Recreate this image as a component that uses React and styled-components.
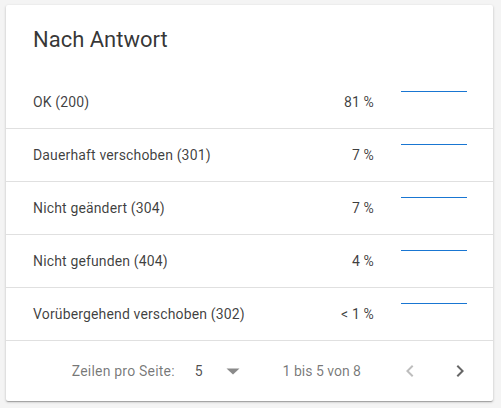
import styled, { createGlobalStyle } from "styled-components";

const GlobalStyle = createGlobalStyle`
    html, body {
        margin: 0;
        padding: 0;
        background: #f4f4f4;
        font-family: Roboto, "Liberation Sans", Arial, sans-serif;
    }
`

const rows = [
    { label: "OK (200)", share: "81 %" },
    { label: "Dauerhaft verschoben (301)", share: "7 %" },
    { label: "Nicht geändert (304)", share: "7 %" },
    { label: "Nicht gefunden (404)", share: "4 %" },
    { label: "Vorübergehend verschoben (302)", share: "< 1 %" },
]

function Sparkline() {
    return (
        <svg width="66" height="30" viewBox="0 0 66 30">
            <line x1="0" y1="4.5" x2="66" y2="4.5" stroke="#1976d2" strokeWidth="1.2" />
        </svg>
    )
}

export default function App() {
    return (
        <>
            <GlobalStyle />
            <Page>
                <Card>
                    <Title>Nach Antwort</Title>

                    <Table>
                        {rows.map((row) => (
                            <Row key={row.label}>
                                <Label>{row.label}</Label>
                                <Share>{row.share}</Share>
                                <Chart>
                                    <Sparkline />
                                </Chart>
                            </Row>
                        ))}
                    </Table>

                    <Footer>
                        <Caption>Zeilen pro Seite:</Caption>
                        <Select>
                            <SelectValue>5</SelectValue>
                            <svg width="14" height="7" viewBox="0 0 14 7">
                                <path d="M0.5 0.5 L7 6.5 L13.5 0.5 Z" fill="#8a8a8a" />
                            </svg>
                        </Select>
                        <Displayed>1 bis 5 von 8</Displayed>
                        <Actions>
                            <PageBtn disabled>
                                <svg width="24" height="24" viewBox="0 0 24 24">
                                    <path d="M15.41 7.41L14 6l-6 6 6 6 1.41-1.41L10.83 12z" fill="currentColor" />
                                </svg>
                            </PageBtn>
                            <PageBtn>
                                <svg width="24" height="24" viewBox="0 0 24 24">
                                    <path d="M10 6L8.59 7.41 13.17 12l-4.58 4.59L10 18l6-6z" fill="currentColor" />
                                </svg>
                            </PageBtn>
                        </Actions>
                    </Footer>
                </Card>
            </Page>
        </>
    );
}

const Page = styled.div`
    width: 501px;
    height: 408px;
    padding: 5px 8px 0 6px;
    box-sizing: border-box;
`

const Card = styled.div`
    width: 487px;
    height: 396px;
    background: #ffffff;
    border-radius: 2px;
    box-shadow: 0 1px 3px rgba(0,0,0,0.2), 0 1px 1px rgba(0,0,0,0.14), 0 2px 1px -1px rgba(0,0,0,0.12);
    display: flex;
    flex-direction: column;
`

const Title = styled.h2`
    margin: 0;
    padding: 19px 27px 0;
    height: 71px;
    box-sizing: border-box;
    font-size: 22px;
    font-weight: 400;
    line-height: 32px;
    color: rgba(0,0,0,0.8);
`

const Table = styled.div`
    display: flex;
    flex-direction: column;
`

const Row = styled.div`
    display: flex;
    align-items: center;
    height: 53px;
    padding: 0 26px 0 27px;
    border-bottom: 1px solid #e0e0e0;
    box-sizing: border-box;
    font-size: 14px;
    letter-spacing: 0.01071em;
    color: rgba(0,0,0,0.76);
`

const Label = styled.div`
    flex: 1;
`

const Share = styled.div`
    text-align: right;
`

const Chart = styled.div`
    width: 66px;
    height: 30px;
    margin-left: 27px;
    display: flex;
`

const Footer = styled.div`
    flex: 1;
    display: flex;
    align-items: center;
    justify-content: flex-end;
    padding: 0 9px 0 0;
    font-size: 14px;
    color: rgba(0,0,0,0.54);
`

const Caption = styled.span`
    letter-spacing: 0.2px;
`

const Select = styled.div`
    display: flex;
    align-items: center;
    margin-left: 20px;
    gap: 23px;
`

const SelectValue = styled.span`
    color: rgba(0,0,0,0.7);
`

const Displayed = styled.span`
    margin-left: 43px;
`

const Actions = styled.div`
    display: flex;
    margin-left: 25px;
    gap: 2px;
`

const PageBtn = styled.button`
    width: 48px;
    height: 48px;
    border: 0;
    padding: 0;
    background: none;
    display: flex;
    align-items: center;
    justify-content: center;
    color: ${(p) => (p.disabled ? "rgba(0,0,0,0.26)" : "rgba(0,0,0,0.6)")};
`
